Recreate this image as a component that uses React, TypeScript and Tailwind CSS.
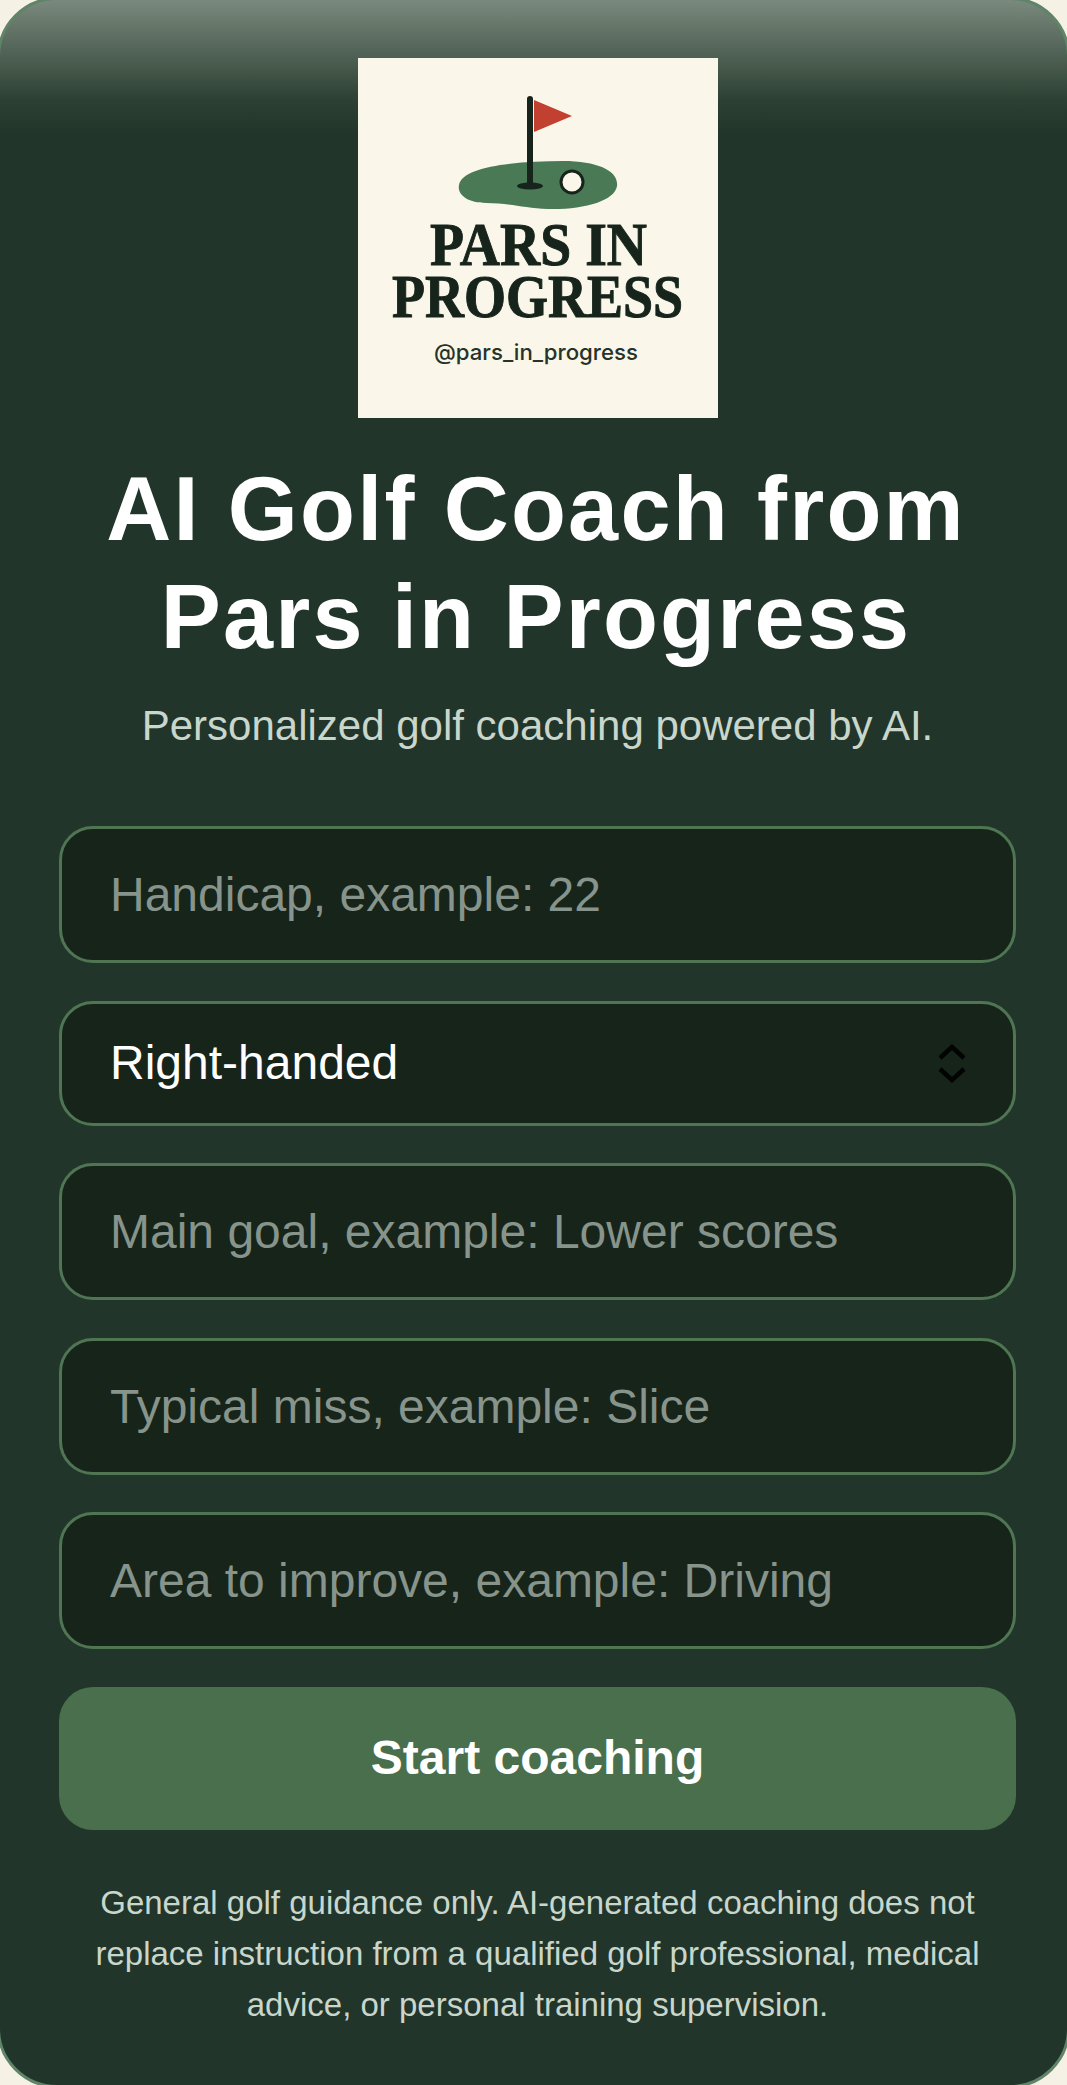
import React from "react";

const field =
  "block w-full h-[137px] rounded-[34px] border-[3px] border-[#4f7553] bg-[#17241a] pl-[48px] pr-[48px] text-[48px] text-white outline-none placeholder:text-[#87948c]";

function Logo() {
  return (
    <div className="w-[360px] h-[360px] bg-[#faf6e9] shrink-0">
      <svg viewBox="0 0 360 360" width="360" height="360" className="block">
        <path d="M101 127 C104 108 160 103 205 103 C240 103 261 113 259 128 C257 143 225 152 190 151 C165 150 150 145 128 145 C110 145 99 137 101 127 Z" fill="#4a7a55" />
        <path d="M172 41 V126" stroke="#16241b" strokeWidth="6" strokeLinecap="round" />
        <ellipse cx="172" cy="128" rx="13" ry="3.5" fill="#16241b" />
        <path d="M176 42 L214 58 L176 74 Z" fill="#c2402f" />
        <circle cx="214" cy="124" r="11" fill="#faf6e9" stroke="#16241b" strokeWidth="3" />
        <text x="180.5" y="207" textAnchor="middle" fontFamily="'Liberation Serif', serif" fontWeight="700" fontSize="62" fill="#16241b" stroke="#16241b" strokeWidth="1" textLength="217" lengthAdjust="spacingAndGlyphs">PARS IN</text>
        <text x="179.5" y="259" textAnchor="middle" fontFamily="'Liberation Serif', serif" fontWeight="700" fontSize="62" fill="#16241b" stroke="#16241b" strokeWidth="1" textLength="291" lengthAdjust="spacingAndGlyphs">PROGRESS</text>
        <text x="178" y="302" textAnchor="middle" fontFamily="Inter, sans-serif" fontWeight="500" fontSize="22" fill="#26332a" textLength="204" lengthAdjust="spacingAndGlyphs">@pars_in_progress</text>
      </svg>
    </div>
  );
}

export default function App() {
  return (
    <div className="w-[1067px] h-[2085px] overflow-hidden bg-[#f5f1e4] font-['Liberation_Sans',Arial,sans-serif]">
      <div className="w-[1073px] h-[2091px] -ml-[3px] -mt-[3px] rounded-[60px] border-[3px] border-[#5f8468] bg-[linear-gradient(180deg,#7a897d_0px,#2c4133_100px,#21352a_135px,#21352a_100%)] pl-[59px] pr-[51px] pt-[58px] flex flex-col items-center overflow-hidden">
        <Logo />
        <h1 className="mt-[37px] mr-[3px] text-center text-[90px] leading-[108px] font-bold tracking-[2.2px] text-white whitespace-nowrap">
          AI Golf Coach from
          <br />
          Pars in Progress
        </h1>
        <p className="mt-[27px] text-[42px] leading-[56px] text-[#c9d6cb] whitespace-nowrap">
          Personalized golf coaching powered by AI.
        </p>
        <form className="mt-[72px] w-full flex flex-col gap-[37.5px]">
          <input className={field} placeholder="Handicap, example: 22" readOnly />
          <div className="relative">
            <select className="block w-full h-[125px] appearance-none rounded-[34px] border-[3px] border-[#4f7553] bg-[#17241a] pl-[48px] pr-[48px] text-[48px] text-white outline-none" defaultValue="Right-handed">
              <option>Right-handed</option>
              <option>Left-handed</option>
            </select>
            <svg className="absolute right-[50px] top-[43px]" width="28" height="39" viewBox="0 0 28 39" fill="none" stroke="#020403" strokeWidth="4.5">
              <path d="M2 14 L14 3 L26 14" />
              <path d="M2 25 L14 36 L26 25" />
            </svg>
          </div>
          <input className={field} placeholder="Main goal, example: Lower scores" readOnly />
          <input className={field} placeholder="Typical miss, example: Slice" readOnly />
          <input className={field} placeholder="Area to improve, example: Driving" readOnly />
          <button type="button" className="h-[143px] rounded-[34px] bg-[#4a6f4c] text-[48px] font-bold text-white">
            Start coaching
          </button>
        </form>
        <p className="mt-[47px] w-full text-center text-[33px] leading-[51px] text-[#c9d6cb] whitespace-nowrap">
          General golf guidance only. AI-generated coaching does not
          <br />
          replace instruction from a qualified golf professional, medical
          <br />
          advice, or personal training supervision.
        </p>
      </div>
    </div>
  );
}
